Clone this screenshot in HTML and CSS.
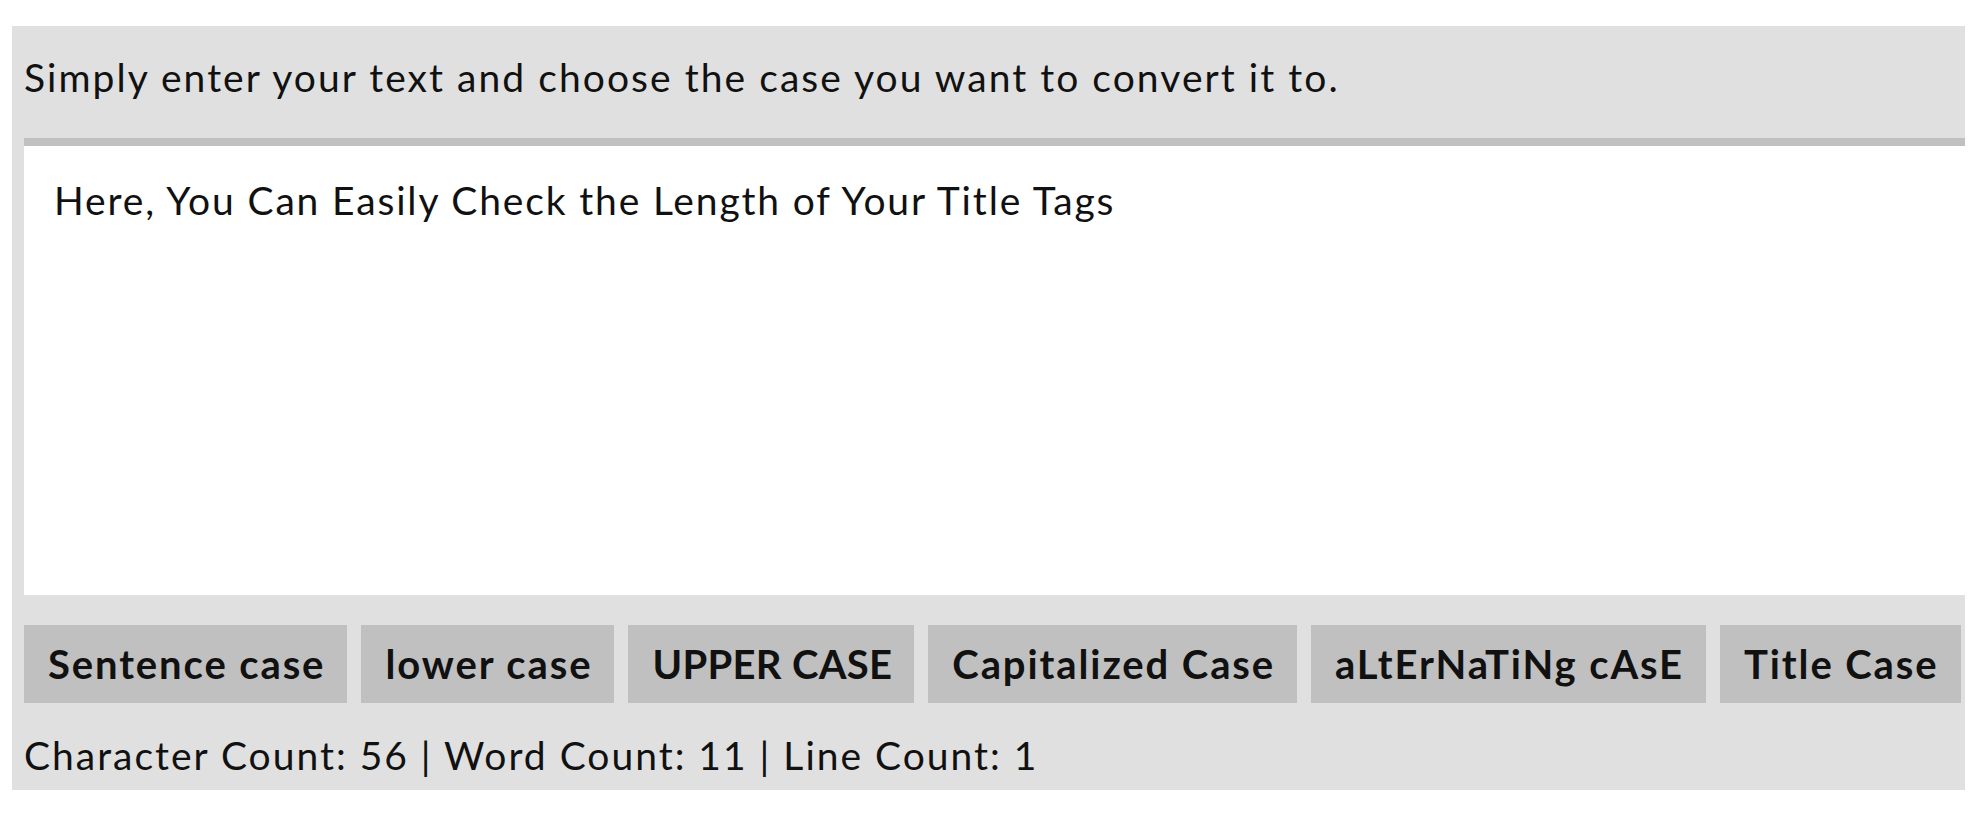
FILE: index.html
```html
<!DOCTYPE html>
<html lang="en">
<head>
    <meta charset="UTF-8">
    <meta name="viewport" content="width=device-width, initial-scale=1.0">
    <title>Case Converter</title>
    <link rel="stylesheet" href="styles.css">
</head>
<body>
    <div id="case-converter">
        <p class="intro">Simply enter your text and choose the case you want to convert it to.</p>

        <textarea id="input-text" spellcheck="false">Here, You Can Easily Check the Length of Your Title Tags</textarea>

        <!-- Case Buttons -->
        <div class="button-row">
            <button class="case-button" data-case="sentence">Sentence case</button>
            <button class="case-button" data-case="lower">lower case</button>
            <button class="case-button upper" data-case="upper">UPPER CASE</button>
            <button class="case-button" data-case="capitalized">Capitalized Case</button>
            <button class="case-button" data-case="alternating">aLtErNaTiNg cAsE</button>
            <button class="case-button" data-case="title">Title Case</button>
        </div>

        <div id="counts">Character Count: 56 | Word Count: 11 | Line Count: 1</div>
    </div>
</body>
</html>
```

FILE: styles.css
```css
body {
    font-family: Lato, "Liberation Sans", sans-serif;
    background-color: #fff;
    color: #111;
    margin: 0;
    padding: 0;
}

#case-converter {
    margin: 26px 19px 0 12px;
    padding: 0 0 11px 12px;
    background-color: #e0e0e0;
    font-size: 39px;
    letter-spacing: 2px;
}

.intro {
    margin: 0;
    padding: 28px 0 37px;
    line-height: 1.2;
    letter-spacing: 2.05px;
}

#input-text {
    display: block;
    box-sizing: border-box;
    width: 100%;
    height: 457px;
    margin: 0;
    padding: 31px 30px;
    border: none;
    border-top: 8px solid #c0c0c0;
    background-color: #fff;
    color: #111;
    font-family: inherit;
    font-size: 39px;
    letter-spacing: 1.85px;
    line-height: 1.2;
    resize: none;
    outline: none;
}

.button-row {
    display: flex;
    gap: 14px;
    margin-top: 30px;
}

.case-button {
    flex-shrink: 0;
    height: 78px;
    padding: 0 22px 0 24px;
    border: none;
    background-color: #c0c0c0;
    color: #111;
    font-family: inherit;
    font-size: 40px;
    font-weight: bold;
    letter-spacing: 1.9px;
    white-space: nowrap;
    cursor: pointer;
}

.case-button.upper {
    letter-spacing: 0.3px;
}

#counts {
    margin-top: 29px;
    line-height: 1.2;
    letter-spacing: 2px;
}
```
